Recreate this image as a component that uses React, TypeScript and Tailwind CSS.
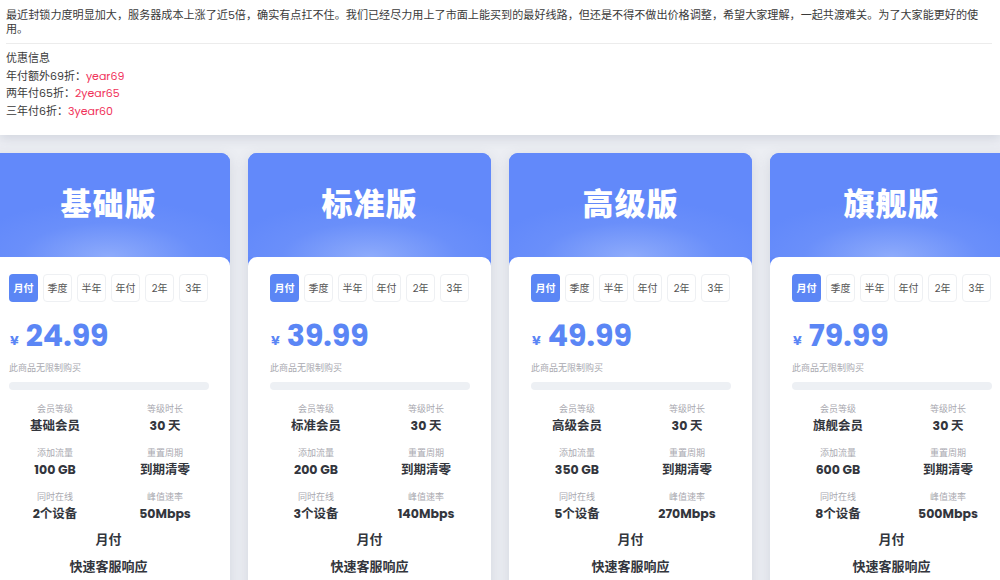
import React from "react";

const plans = [
  { name: "基础版", price: "24.99", level: "基础会员", traffic: "100 GB", devices: "2个设备", speed: "50Mbps" },
  { name: "标准版", price: "39.99", level: "标准会员", traffic: "200 GB", devices: "3个设备", speed: "140Mbps" },
  { name: "高级版", price: "49.99", level: "高级会员", traffic: "350 GB", devices: "5个设备", speed: "270Mbps" },
  { name: "旗舰版", price: "79.99", level: "旗舰会员", traffic: "600 GB", devices: "8个设备", speed: "500Mbps" },
];

const periods = ["月付", "季度", "半年", "年付", "2年", "3年"];

function Stat({ label, value }: { label: string; value: string }) {
  return (
    <div className="flex flex-col items-center">
      <span className="text-[9px] leading-[12px] text-[#a9a9b0]">{label}</span>
      <span className="mt-[3px] text-[12.5px] leading-[16px] font-bold text-[#33363d]">{value}</span>
    </div>
  );
}

function PlanCard({ plan }: { plan: (typeof plans)[number] }) {
  return (
    <div className="w-[243px] shrink-0 rounded-t-[9px] bg-[#6289fa] shadow-[0_4px_14px_rgba(90,100,130,0.18)] overflow-hidden">
      <div className="h-[104px] flex items-center justify-center bg-[radial-gradient(ellipse_60%_55%_at_50%_100%,#8eabfb_0%,#6a8ffa_60%,#6289fa_100%)]">
        <span className="text-[31px] font-black text-white tracking-[1px] mb-[2px]">{plan.name}</span>
      </div>
      <div className="bg-white rounded-t-[9px] px-[22px] pt-[17px] h-[340px]">
        <div className="flex gap-[5px]">
          {periods.map((p, i) => (
            <div
              key={p}
              className={
                i === 0
                  ? "w-[29px] h-[28px] rounded-[4px] bg-[#5b86f5] text-white text-[10px] font-bold flex items-center justify-center"
                  : "w-[29px] h-[28px] rounded-[4px] border border-[#eef0f3] text-[#555] text-[10px] flex items-center justify-center"
              }
            >
              {p}
            </div>
          ))}
        </div>
        <div className="mt-[16px] flex items-end h-[36px]">
          <span className="text-[13px] font-bold text-[#5b86f5] mb-[4px] ml-[1px] mr-[7px]">¥</span>
          <span className="text-[30px] leading-[36px] font-bold text-[#5b86f5]">{plan.price}</span>
        </div>
        <div className="mt-[8px] text-[9px] leading-[12px] text-[#a9a9b0]">此商品无限制购买</div>
        <div className="mt-[8px] h-[8px] w-[200px] rounded-full bg-[#edf0f4]" />
        <div className="grid grid-cols-[110px_110px] w-[220px] ml-[-9px] mt-[13px] gap-y-[13px]">
          <Stat label="会员等级" value={plan.level} />
          <Stat label="等级时长" value="30 天" />
          <Stat label="添加流量" value={plan.traffic} />
          <Stat label="重置周期" value="到期清零" />
          <Stat label="同时在线" value={plan.devices} />
          <Stat label="峰值速率" value={plan.speed} />
        </div>
        <div className="mt-[9px] text-center text-[13px] leading-[18px] font-bold text-[#33363d]">月付</div>
        <div className="mt-[9px] text-center text-[13px] leading-[18px] font-bold text-[#33363d]">快速客服响应</div>
      </div>
    </div>
  );
}

export default function App() {
  return (
    <div
      className="w-[1000px] h-[580px] overflow-hidden bg-[#eceef3]"
      style={{ fontFamily: 'Poppins, Inter, "Noto Sans CJK SC", sans-serif' }}
    >
      <div className="bg-white px-[6px] pt-[8px] pb-[15px] shadow-[0_4px_10px_rgba(100,110,140,0.18)] relative z-10">
        <p className="text-[11.1px] leading-[14px] text-[#3a3a3a]">
          最近封锁力度明显加大，服务器成本上涨了近5倍，确实有点扛不住。我们已经尽力用上了市面上能买到的最好线路，但还是不得不做出价格调整，希望大家理解，一起共渡难关。为了大家能更好的使用。
        </p>
        <div className="mt-[7px] mr-[2px] border-t border-[#ececec]" />
        <div className="mt-[6px] text-[11px] leading-[17.5px] text-[#3a3a3a]">
          <div>优惠信息</div>
          <div>
            年付额外69折：<span className="text-[#f0325a]">year69</span>
          </div>
          <div>
            两年付65折：<span className="text-[#f0325a]">2year65</span>
          </div>
          <div>
            三年付6折：<span className="text-[#f0325a]">3year60</span>
          </div>
        </div>
      </div>
      <div className="flex gap-[18px] ml-[-13px] mt-[18px]">
        {plans.map((p) => (
          <PlanCard key={p.name} plan={p} />
        ))}
      </div>
    </div>
  );
}
